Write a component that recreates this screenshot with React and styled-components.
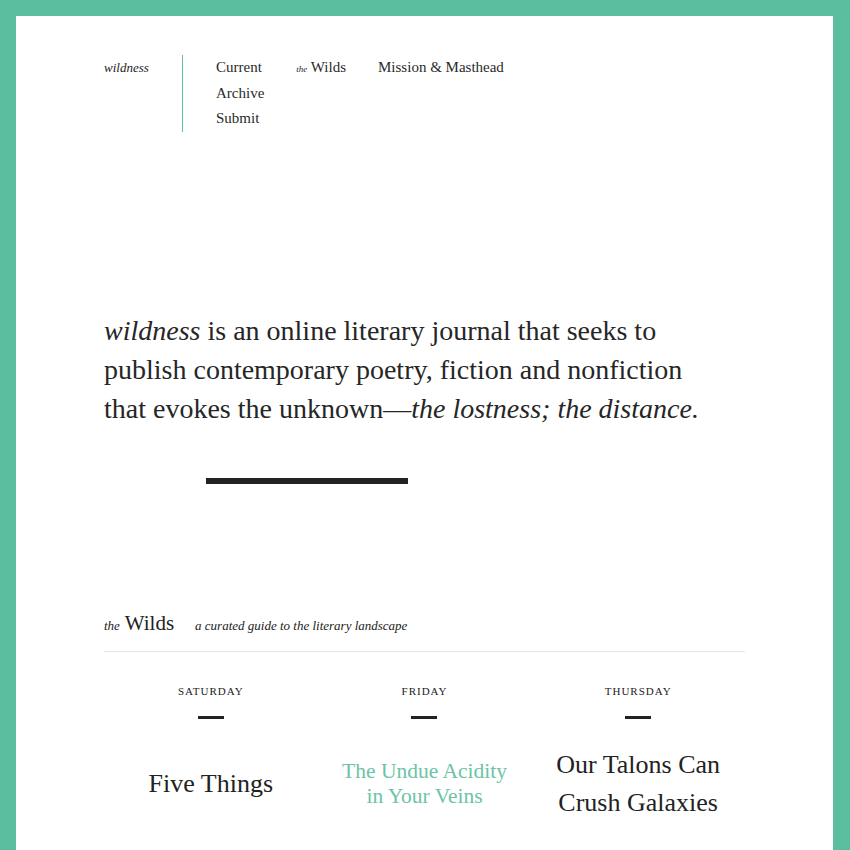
import React from 'react'
import styled, { createGlobalStyle } from 'styled-components'

const GlobalStyle = createGlobalStyle`
    html, body {
        margin: 0;
        padding: 0;
    }
    body {
        background: #5bbe9f;
        padding: 16px 17px 0 16px;
        font-family: "Liberation Serif", "Times New Roman", serif;
        color: #222;
    }
`

const days = [
    { day: 'Saturday', lines: ['Five Things'] },
    { day: 'Friday', lines: ['The Undue Acidity', 'in Your Veins'], accent: true },
    { day: 'Thursday', lines: ['Our Talons Can', 'Crush Galaxies'] },
]

function App() {
    return (
        <>
            <GlobalStyle />
            <Page>
                <Header>
                    <Logo>wildness</Logo>
                    <Nav>
                        <NavColumn>
                            <NavLink>Current</NavLink>
                            <NavLink>Archive</NavLink>
                            <NavLink>Submit</NavLink>
                        </NavColumn>
                        <NavColumn>
                            <NavLink><Tiny>the</Tiny> Wilds</NavLink>
                        </NavColumn>
                        <NavColumn>
                            <NavLink>Mission &amp; Masthead</NavLink>
                        </NavColumn>
                    </Nav>
                </Header>

                <Intro>
                    <em>wildness</em> is an online literary journal that seeks to publish
                    contemporary poetry, fiction and nonfiction that evokes the
                    unknown—<em>the lostness; the distance.</em>
                </Intro>
                <Rule />

                <WildsHead>
                    <WildsTitle><small>the</small> Wilds</WildsTitle>
                    <Tagline>a curated guide to the literary landscape</Tagline>
                </WildsHead>

                <Columns>
                    {days.map(d => (
                        <Entry key={d.day}>
                            <Day>{d.day}</Day>
                            <Dash />
                            <TitleBox>
                                <Title accent={d.accent}>
                                    {d.lines.map((l, i) => (
                                        <span key={i}>{l}{i < d.lines.length - 1 && <br />}</span>
                                    ))}
                                </Title>
                            </TitleBox>
                        </Entry>
                    ))}
                </Columns>
            </Page>
        </>
    )
}

const Page = styled.div`
    background: #fff;
    min-height: 900px;
    padding: 39px 88px 40px 88px;
`

const Header = styled.header`
    display: flex;
    align-items: flex-start;
`

const Logo = styled.div`
    width: 78px;
    font-size: 13px;
    font-style: italic;
    line-height: 25.5px;
`

const Nav = styled.nav`
    display: flex;
    gap: 32px;
    border-left: 1px solid #5bbe9f;
    padding-left: 33px;
`

const NavColumn = styled.div`
    display: flex;
    flex-direction: column;
`

const NavLink = styled.a`
    font-size: 15px;
    line-height: 25.5px;
    color: #2a2a2a;
`

const Tiny = styled.span`
    font-size: 9px;
    font-style: italic;
`

const Intro = styled.p`
    margin: 179px 0 0 0;
    font-size: 28px;
    line-height: 39px;
    width: 620px;
    color: #262626;
`

const Rule = styled.div`
    margin: 50px 0 0 102px;
    width: 202px;
    height: 6px;
    background: #222;
`

const WildsHead = styled.div`
    margin-top: 124px;
    display: flex;
    align-items: baseline;
    gap: 21px;
    padding-bottom: 10px;
    border-bottom: 1px solid #e6e6e6;
    line-height: 30px;
`

const WildsTitle = styled.div`
    font-size: 21px;
    small {
        font-size: 13px;
        font-style: italic;
    }
`

const Tagline = styled.div`
    font-size: 13px;
    font-style: italic;
`

const Columns = styled.div`
    display: grid;
    grid-template-columns: repeat(3, 1fr);
    padding-top: 31px;
`

const Entry = styled.div`
    display: flex;
    flex-direction: column;
    align-items: center;
    text-align: center;
`

const Day = styled.div`
    font-size: 11px;
    line-height: 16px;
    letter-spacing: 1px;
    text-transform: uppercase;
`

const Dash = styled.div`
    margin-top: 17px;
    width: 26px;
    height: 3px;
    background: #222;
`

const TitleBox = styled.div`
    margin-top: 20px;
    height: 90px;
    display: flex;
    align-items: center;
    justify-content: center;
`

const Title = styled.div`
    font-size: ${props => (props.accent ? '21.5px' : '26px')};
    line-height: ${props => (props.accent ? '25px' : '38px')};
    color: ${props => (props.accent ? '#6cc3a6' : '#222')};
`

export default App
